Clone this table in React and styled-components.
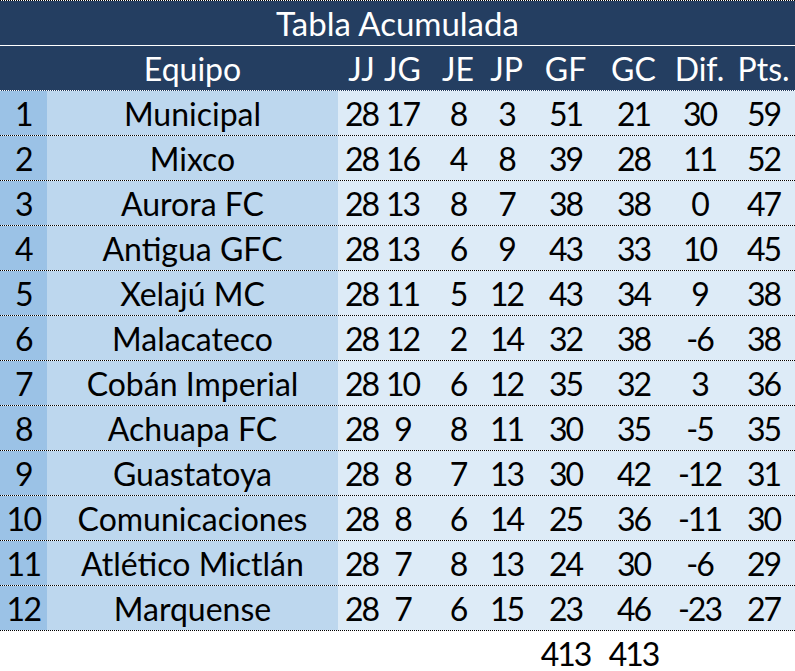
import styled, { createGlobalStyle } from 'styled-components'

const GlobalStyle = createGlobalStyle`
  html, body {
    margin: 0;
    padding: 0;
    background: #fff;
  }
  body {
    font-family: Lato, "Open Sans", sans-serif;
    color: #000;
  }
`

const columns = [
  { key: 'jj', label: 'JJ', width: 43, nudge: 2 },
  { key: 'jg', label: 'JG', width: 47, nudge: -2 },
  { key: 'je', label: 'JE', width: 54, nudge: 3 },
  { key: 'jp', label: 'JP', width: 53, nudge: -2 },
  { key: 'gf', label: 'GF', width: 65, nudge: -2 },
  { key: 'gc', label: 'GC', width: 67, nudge: 0 },
  { key: 'dif', label: 'Dif.', width: 65, nudge: 0 },
  { key: 'pts', label: 'Pts.', width: 63, nudge: 0 },
]

const teams = [
  ['Municipal', 28, 17, 8, 3, 51, 21, 30, 59],
  ['Mixco', 28, 16, 4, 8, 39, 28, 11, 52],
  ['Aurora FC', 28, 13, 8, 7, 38, 38, 0, 47],
  ['Antigua GFC', 28, 13, 6, 9, 43, 33, 10, 45],
  ['Xelajú MC', 28, 11, 5, 12, 43, 34, 9, 38],
  ['Malacateco', 28, 12, 2, 14, 32, 38, -6, 38],
  ['Cobán Imperial', 28, 10, 6, 12, 35, 32, 3, 36],
  ['Achuapa FC', 28, 9, 8, 11, 30, 35, -5, 35],
  ['Guastatoya', 28, 8, 7, 13, 30, 42, -12, 31],
  ['Comunicaciones', 28, 8, 6, 14, 25, 36, -11, 30],
  ['Atlético Mictlán', 28, 7, 8, 13, 24, 30, -6, 29],
  ['Marquense', 28, 7, 6, 15, 23, 46, -23, 27],
]

const template = `47px 291px ${columns.map((c) => c.width + 'px').join(' ')}`

export default function App() {
  return (
    <>
      <GlobalStyle />
      <Sheet>
        <Title>Tabla Acumulada</Title>
        <HeaderRow>
          <HeadCell />
          <HeadCell>Equipo</HeadCell>
          {columns.map((c) => (
            <HeadCell key={c.key} $nudge={c.nudge}>{c.label}</HeadCell>
          ))}
        </HeaderRow>
        {teams.map(([name, ...stats], i) => (
          <Row key={name}>
            <RankCell>{i + 1}</RankCell>
            <TeamCell>{name}</TeamCell>
            {stats.map((v, j) => (
              <NumCell key={columns[j].key} $nudge={columns[j].nudge}>{v}</NumCell>
            ))}
          </Row>
        ))}
        <TotalRow>
          <span />
          <span />
          <span />
          <span />
          <span />
          <span />
          <NumCell $nudge={-2}>413</NumCell>
          <NumCell $nudge={0}>413</NumCell>
        </TotalRow>
      </Sheet>
    </>
  )
}

const Sheet = styled.div`
  width: 795px;
  height: 671px;
  overflow: hidden;
  display: flex;
  flex-direction: column;
`

const Title = styled.div`
  flex: none;
  height: 44px;
  background-color: #243e61;
  background-clip: padding-box;
  border-top: 1px dotted #000;
  color: #fff;
  font-size: 33px;
  display: flex;
  align-items: center;
  justify-content: center;
  position: relative;
  &::after {
    content: '';
    position: absolute;
    left: 0;
    right: 0;
    bottom: -1px;
    height: 1px;
    background: repeating-linear-gradient(90deg, #fff 0 2px, transparent 2px 3px);
  }
`

const Grid = styled.div`
  flex: none;
  display: grid;
  grid-template-columns: ${template};
  height: 44px;
  border-bottom: 1px dotted #000;
`

const HeaderRow = styled(Grid)`
  background-color: #243e61;
  color: #fff;
  font-size: 32px;
  border-bottom-color: #fff;
  margin-top: 1px;
`

const Row = styled(Grid)`
  background-color: #ddebf7;
  background-clip: padding-box;
  border-bottom-color: #000;
  font-size: 32px;
`

const Cell = styled.div`
  display: flex;
  align-items: center;
  justify-content: center;
  white-space: nowrap;
  padding-left: ${(p) => (p.$nudge > 0 ? p.$nudge * 2 : 0)}px;
  padding-right: ${(p) => (p.$nudge < 0 ? -p.$nudge * 2 : 0)}px;
`

const HeadCell = styled(Cell)`
  padding-top: 1px;
`

const RankCell = styled(Cell)`
  background-color: #9bc2e6;
  letter-spacing: -1.5px;
`

const TeamCell = styled(Cell)`
  background-color: #bdd7ee;
`

const NumCell = styled(Cell)`
  letter-spacing: -2px;
`

const TotalRow = styled.div`
  flex: none;
  display: grid;
  grid-template-columns: ${template};
  height: 44px;
  font-size: 32px;
`
